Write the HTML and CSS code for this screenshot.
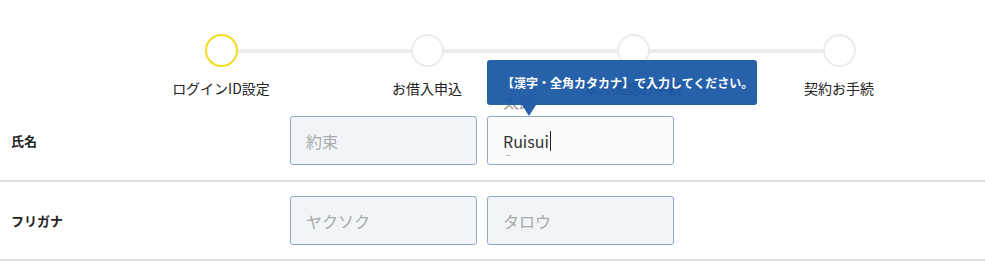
FILE: index.html
```html
<!DOCTYPE html>
<html lang="ja">
<head>
<meta charset="utf-8">
<link rel="stylesheet" href="styles.css">
</head>
<body>
<div class="steps">
  <div class="steps-line"></div>
  <div class="step active"><span class="dot"></span><span class="step-label">ログインID設定</span></div>
  <div class="step"><span class="dot"></span><span class="step-label">お借入申込</span></div>
  <div class="step"><span class="dot"></span><span class="step-label">本人確認お手続</span></div>
  <div class="step"><span class="dot"></span><span class="step-label">契約お手続</span></div>
</div>
<div class="form">
  <div class="row">
    <div class="row-label">氏名</div>
    <div class="field"><div class="input placeholder">約束</div></div>
    <div class="field">
      <span class="ghost">太郎</span>
      <div class="input focused"><span class="value">Ruisui</span><span class="caret"></span><span class="ime">--</span></div>
      <div class="tooltip">【漢字・全角カタカナ】で入力してください。</div>
    </div>
  </div>
  <div class="row">
    <div class="row-label">フリガナ</div>
    <div class="field"><div class="input placeholder">ヤクソク</div></div>
    <div class="field"><div class="input placeholder">タロウ</div></div>
  </div>
</div>
</body>
</html>
```
FILE: styles.css
```css
* { box-sizing: border-box; }
body {
  margin: 0;
  background: #fff;
  font-family: "Noto Sans CJK JP", "Noto Sans", sans-serif;
  color: #222;
}
.steps {
  position: relative;
  display: flex;
  padding: 34px 0 0 118px;
}
.steps-line {
  position: absolute;
  left: 221px;
  top: 49px;
  width: 618px;
  height: 4px;
  background: #ececec;
}
.step {
  position: relative;
  width: 206px;
  display: flex;
  flex-direction: column;
  align-items: center;
}
.dot {
  width: 33px;
  height: 33px;
  border-radius: 50%;
  border: 2px solid #ececec;
  background: #fff;
}
.step.active .dot { border-color: #f4dc1c; }
.step-label {
  margin-top: 11px;
  font-size: 14px;
  line-height: 20px;
  white-space: nowrap;
}
.form { margin-top: 4px; }
.row {
  display: grid;
  grid-template-columns: 269px 187px 187px;
  column-gap: 10px;
  align-items: center;
  padding: 14px 0 14px 11px;
  border-bottom: 2px solid #dedede;
}
.row:first-child { padding-bottom: 15px; }
.row-label {
  font-size: 13px;
  font-weight: 700;
  color: #222;
}
.field { position: relative; }
.input {
  position: relative;
  height: 49px;
  border: 1px solid #8eaac8;
  border-radius: 3px;
  background: #f1f5f9;
  padding: 0 15px;
  display: flex;
  align-items: center;
  font-size: 16px;
}
.input.placeholder { color: #a9a9a9; }
.input.focused { background: #fafcfe; color: #333; }
.caret {
  width: 1px;
  height: 20px;
  background: #222;
  margin-left: 1px;
}
.ime {
  position: absolute;
  left: 18px;
  top: 33px;
  font-size: 7px;
  line-height: 8px;
  color: #555;
}
.ghost {
  position: absolute;
  left: 16px;
  top: -24px;
  font-size: 16px;
  line-height: 18px;
  color: #9a9a9a;
}
.tooltip {
  position: absolute;
  left: 0;
  top: -56px;
  width: 270px;
  height: 45px;
  padding: 0 15px;
  display: flex;
  align-items: center;
  border-radius: 3px;
  background: rgba(26, 87, 165, 0.94);
  color: #fff;
  font-size: 12px;
  font-weight: 700;
  white-space: nowrap;
}
.tooltip::after {
  content: "";
  position: absolute;
  left: 35px;
  top: 45px;
  border-left: 7px solid transparent;
  border-right: 7px solid transparent;
  border-top: 11px solid rgba(26, 87, 165, 0.94);
}
```
